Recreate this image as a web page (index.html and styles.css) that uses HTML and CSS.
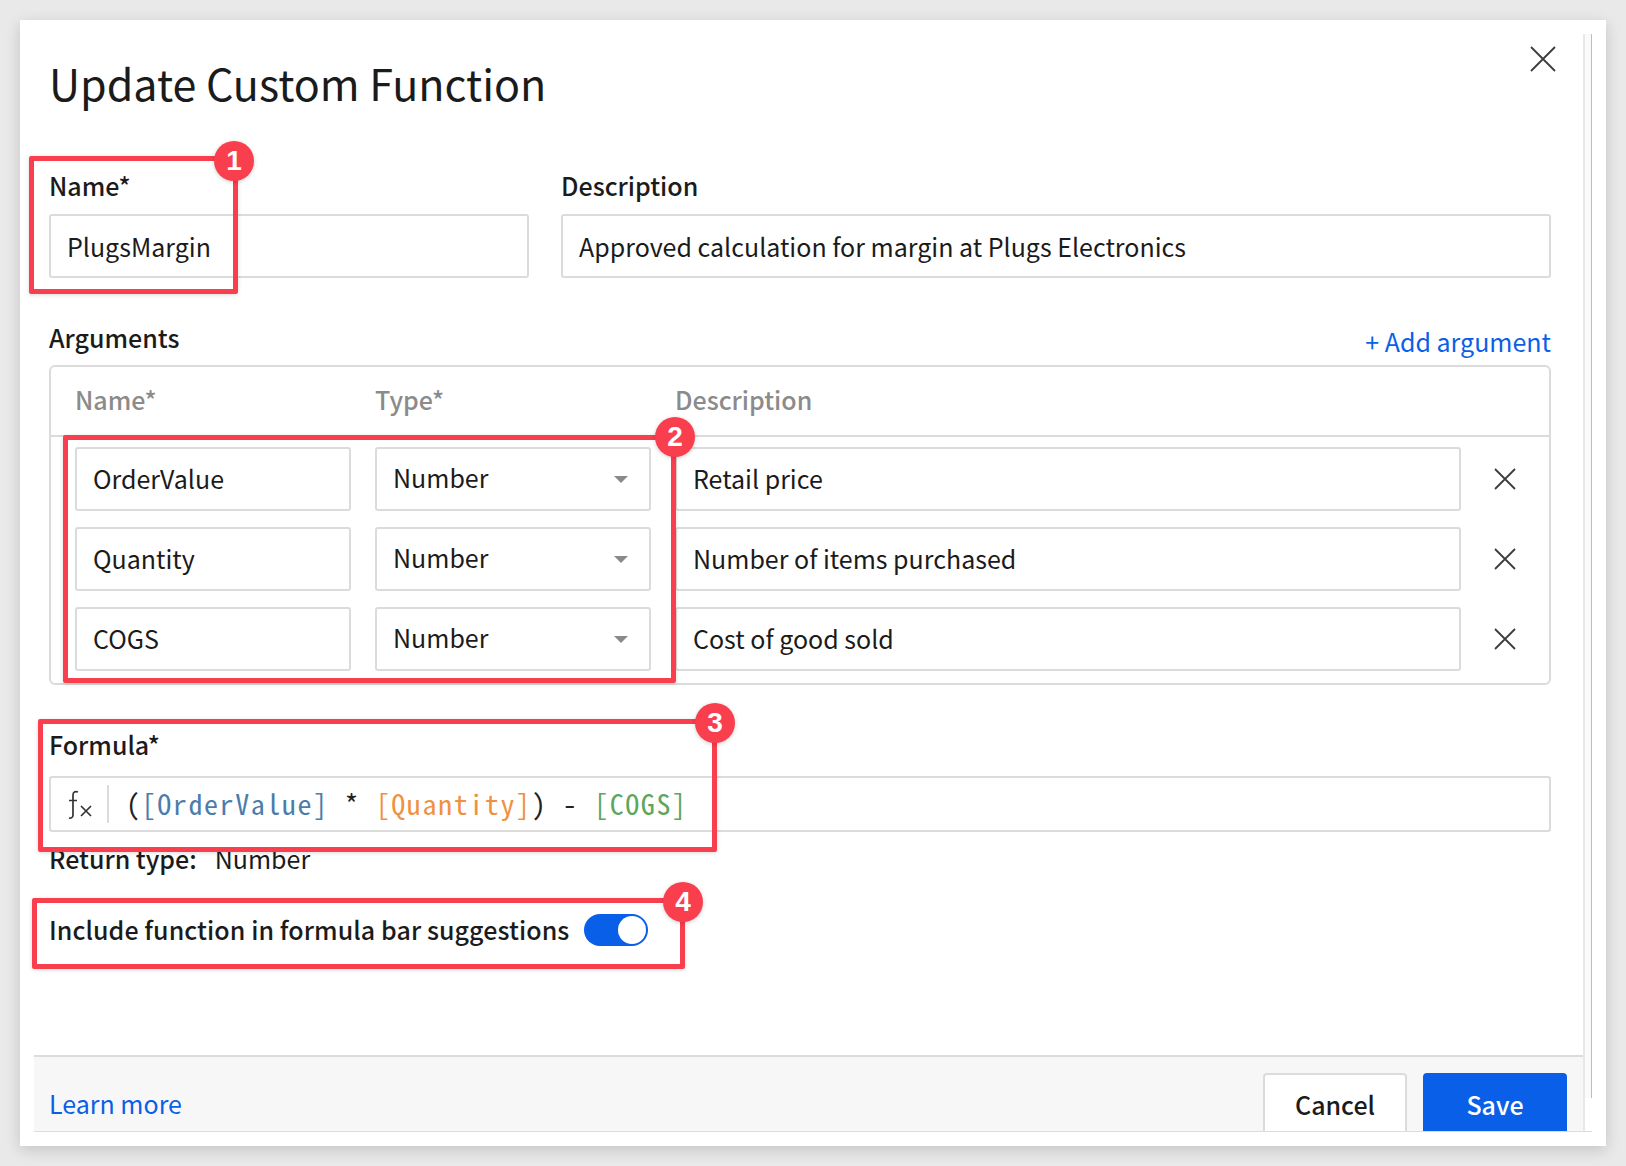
FILE: index.html
```html
<!DOCTYPE html>
<html>
<head>
	<meta charset="UTF-8">
	<meta name="viewport" content="width=device-width, initial-scale=1.0">
	<title>Update Custom Function</title>
	<link rel="stylesheet" href="styles.css">
</head>
<body>
	<div class="modal">
		<div class="modal-body">
			<div class="dialog">
				<form class="form">
					<svg class="close" viewBox="0 0 26 26"><path d="M1 1 25 25M25 1 1 25"/></svg>
					<h1>Update Custom Function</h1>

					<div class="top-row">
						<div class="col-name">
							<div class="label">Name*</div>
							<div class="field">PlugsMargin</div>
						</div>
						<div class="col-desc">
							<div class="label">Description</div>
							<div class="field">Approved calculation for margin at Plugs Electronics</div>
						</div>
					</div>

					<div class="args-head">
						<div class="label">Arguments</div>
						<a class="link add-arg">+ Add argument</a>
					</div>
					<div class="args">
						<div class="args-cols">
							<div class="arg-name">Name*</div>
							<div class="arg-type">Type*</div>
							<div class="arg-desc">Description</div>
						</div>
						<div class="args-rows">
							<div class="arg-row">
								<div class="field arg-name">OrderValue</div>
								<div class="field arg-type">Number<span class="caret"></span></div>
								<div class="field arg-desc">Retail price</div>
								<svg class="remove" viewBox="0 0 24 24"><path d="M2 2 22 22M22 2 2 22"/></svg>
							</div>
							<div class="arg-row">
								<div class="field arg-name">Quantity</div>
								<div class="field arg-type">Number<span class="caret"></span></div>
								<div class="field arg-desc">Number of items purchased</div>
								<svg class="remove" viewBox="0 0 24 24"><path d="M2 2 22 22M22 2 2 22"/></svg>
							</div>
							<div class="arg-row">
								<div class="field arg-name">COGS</div>
								<div class="field arg-type">Number<span class="caret"></span></div>
								<div class="field arg-desc">Cost of good sold</div>
								<svg class="remove" viewBox="0 0 24 24"><path d="M2 2 22 22M22 2 2 22"/></svg>
							</div>
						</div>
					</div>

					<div class="label formula-label">Formula*</div>
					<div class="formula">
						<span class="fx">
							<svg viewBox="0 0 26 30"><path class="fx-f" d="M11 3C8 2 6 3 6 6L6 26C6 28.500 4 29.500 2 29M2 11.500H10"/><path class="fx-x" d="M14 17 24 27M24 17 14 27"/></svg>
						</span>
						<code>(<span class="t-blue">[OrderValue]</span> * <span class="t-orange">[Quantity]</span>) - <span class="t-green">[COGS]</span></code>
					</div>
					<div class="return-type"><b>Return type:</b><span>Number</span></div>
					<div class="suggest">
						<span class="label">Include function in formula bar suggestions</span>
						<span class="toggle"><span class="knob"></span></span>
					</div>
				</form>

				<div class="footer">
					<a class="link">Learn more</a>
					<div class="buttons">
						<button type="button" class="btn">Cancel</button>
						<button type="button" class="btn btn-save">Save</button>
					</div>
				</div>
			</div>
			<div class="scrollbar"><div class="scrollbar-track"></div></div>
		</div>

		<!-- red callouts -->
		<div class="mark mark-1"><span class="badge">1</span></div>
		<div class="mark mark-2"><span class="badge">2</span></div>
		<div class="mark mark-3"><span class="badge">3</span></div>
		<div class="mark mark-4"><span class="badge">4</span></div>
	</div>
</body>
</html>
```

FILE: styles.css
```css
* {
	box-sizing: border-box;
}

body {
	margin: 0;
	height: 1166px;
	overflow: hidden;
	background-color: #e9e9e9;
	color: #1b1b1b;
	font-family: "Noto Sans CJK JP", "Noto Sans", sans-serif;
	font-size: 25px;
}

.modal {
	position: relative;
	width: 1586px;
	height: 1126px;
	margin: 20px 0 0 20px;
	padding: 14px 14px 14px 14px;
	background-color: #fff;
	box-shadow: 0 4px 14px rgba(0,0,0,0.16);
}

.modal-body {
	display: flex;
	height: 100%;
	border-bottom: 1px solid #dcdcdc;
}

.dialog {
	flex: 1;
	display: flex;
	flex-direction: column;
}

.form {
	position: relative;
	flex: 1;
	padding: 0 32px 0 15px;
}

.scrollbar {
	width: 9px;
	border-left: 2px solid #e8e8e8;
}

.scrollbar-track {
	height: 1064px;
	background-color: #fafafa;
	border-right: 1px solid #bdbdbd;
}

.close {
	position: absolute;
	top: 12px;
	right: 27px;
	width: 26px;
	height: 26px;
}

.close path, .remove path {
	fill: none;
	stroke: #3c3c3c;
	stroke-width: 1.8;
}

h1 {
	margin: 0;
	padding-top: 18px;
	font-size: 43px;
	font-weight: 400;
	line-height: 60px;
}

.label {
	font-weight: 500;
	line-height: 36px;
}

.top-row {
	display: flex;
	gap: 32px;
	margin-top: 55px;
}

.col-name {
	width: 480px;
}

.col-desc {
	flex: 1;
}

.top-row .field {
	margin-top: 11px;
	padding-bottom: 1px;
}

.field {
	display: flex;
	align-items: center;
	position: relative;
	height: 64px;
	padding: 0 16px 2px 16px;
	background-color: #fff;
	border: 2px solid #dbdbdb;
	border-radius: 3px;
}

.link {
	color: #0a5fe8;
}

.args-head {
	display: flex;
	justify-content: space-between;
	height: 46px;
	margin-top: 41px;
}

.add-arg {
	line-height: 44px;
}

.args {
	height: 320px;
	border: 2px solid #dbdbdb;
	border-radius: 6px;
}

.args-cols {
	display: flex;
	height: 70px;
	padding: 0 24px 4px 24px;
	gap: 24px;
	align-items: center;
	color: #8b8b8b;
	font-weight: 500;
	border-bottom: 2px solid #dbdbdb;
}

.arg-name {
	width: 276px;
}

.arg-type {
	width: 276px;
	padding-bottom: 4px;
}

.args-cols .arg-type {
	padding-bottom: 0;
}

.arg-desc {
	width: 786px;
}

.args-rows {
	display: flex;
	flex-direction: column;
	gap: 16px;
	padding: 10px 24px 0 24px;
}

.arg-row {
	display: flex;
	gap: 24px;
	align-items: center;
}

.caret {
	position: absolute;
	right: 21px;
	top: 27px;
	border-left: 7px solid transparent;
	border-right: 7px solid transparent;
	border-top: 7px solid #8a8a8a;
}

.remove {
	width: 24px;
	height: 24px;
	margin-left: 8px;
}

.formula-label {
	margin-top: 41px;
}

.formula {
	display: flex;
	align-items: center;
	height: 56px;
	margin-top: 14px;
	padding-left: 16px;
	border: 2px solid #dbdbdb;
	border-radius: 3px;
}

.fx {
	display: flex;
	align-items: center;
	height: 38px;
	width: 42px;
	border-right: 2px solid #dbdbdb;
}

.fx svg {
	width: 26px;
	height: 30px;
}

.fx path {
	fill: none;
	stroke: #333;
}

.fx-f {
	stroke-width: 1.7;
}

.fx-x {
	stroke-width: 1.7;
}

code {
	margin-left: 17px;
	padding-bottom: 2px;
	font-family: "Noto Sans Mono CJK JP", "DejaVu Sans Mono", monospace;
	font-size: 28px;
	letter-spacing: 1.6px;
	color: #222;
}

.t-blue {
	color: #4b7cab;
}

.t-orange {
	color: #ef9140;
}

.t-green {
	color: #5da65d;
}

.return-type {
	display: flex;
	gap: 18px;
	margin-top: 8px;
	line-height: 36px;
}

.return-type b {
	font-weight: 500;
}

.suggest {
	display: flex;
	align-items: center;
	gap: 15px;
	margin-top: 35px;
	height: 36px;
}

.suggest .label {
	letter-spacing: 0.08px;
}

.toggle {
	display: flex;
	justify-content: flex-end;
	align-items: center;
	width: 64px;
	height: 32px;
	margin-top: 2px;
	padding: 2px;
	background-color: #0a5fe8;
	border-radius: 16px;
}

.knob {
	width: 28px;
	height: 28px;
	background-color: #fff;
	border-radius: 50%;
}

.footer {
	display: flex;
	justify-content: space-between;
	height: 76px;
	padding: 16px 16px 0 15px;
	overflow: hidden;
	background-color: #f7f7f7;
	border-top: 2px solid #dcdcdc;
}

.footer .link {
	margin-top: 12px;
}

.buttons {
	display: flex;
	gap: 16px;
}

.btn {
	width: 144px;
	height: 66px;
	padding: 0 0 4px 0;
	font-family: inherit;
	font-size: 25px;
	font-weight: 500;
	color: #1b1b1b;
	background-color: #fff;
	border: 2px solid #dbdbdb;
	border-radius: 4px;
}

.btn-save {
	color: #fff;
	background-color: #0a5fe8;
	border-color: #0a5fe8;
}

.mark {
	position: absolute;
	border: 5px solid #f93e4e;
	border-radius: 2px;
	box-shadow: 0 1px 4px rgba(0,0,0,0.15);
}

.mark-1 {
	left: 9px;
	top: 136px;
	width: 209px;
	height: 138px;
}

.mark-2 {
	left: 43px;
	top: 415px;
	width: 613px;
	height: 248px;
}

.mark-3 {
	left: 18px;
	top: 699px;
	width: 679px;
	height: 133px;
}

.mark-4 {
	left: 12px;
	top: 878px;
	width: 653px;
	height: 71px;
}

.badge {
	position: absolute;
	top: -21px;
	right: -23px;
	width: 40px;
	height: 40px;
	line-height: 40px;
	text-align: center;
	color: #fff;
	font-family: "Liberation Sans", sans-serif;
	font-size: 28px;
	font-weight: 700;
	background-color: #f93e4e;
	border-radius: 50%;
	box-shadow: 0 1px 4px rgba(0,0,0,0.2);
}

.mark-1 .badge {
	top: -20px;
	right: -21px;
}

.mark-2 .badge {
	top: -23px;
	right: -24px;
}
```
